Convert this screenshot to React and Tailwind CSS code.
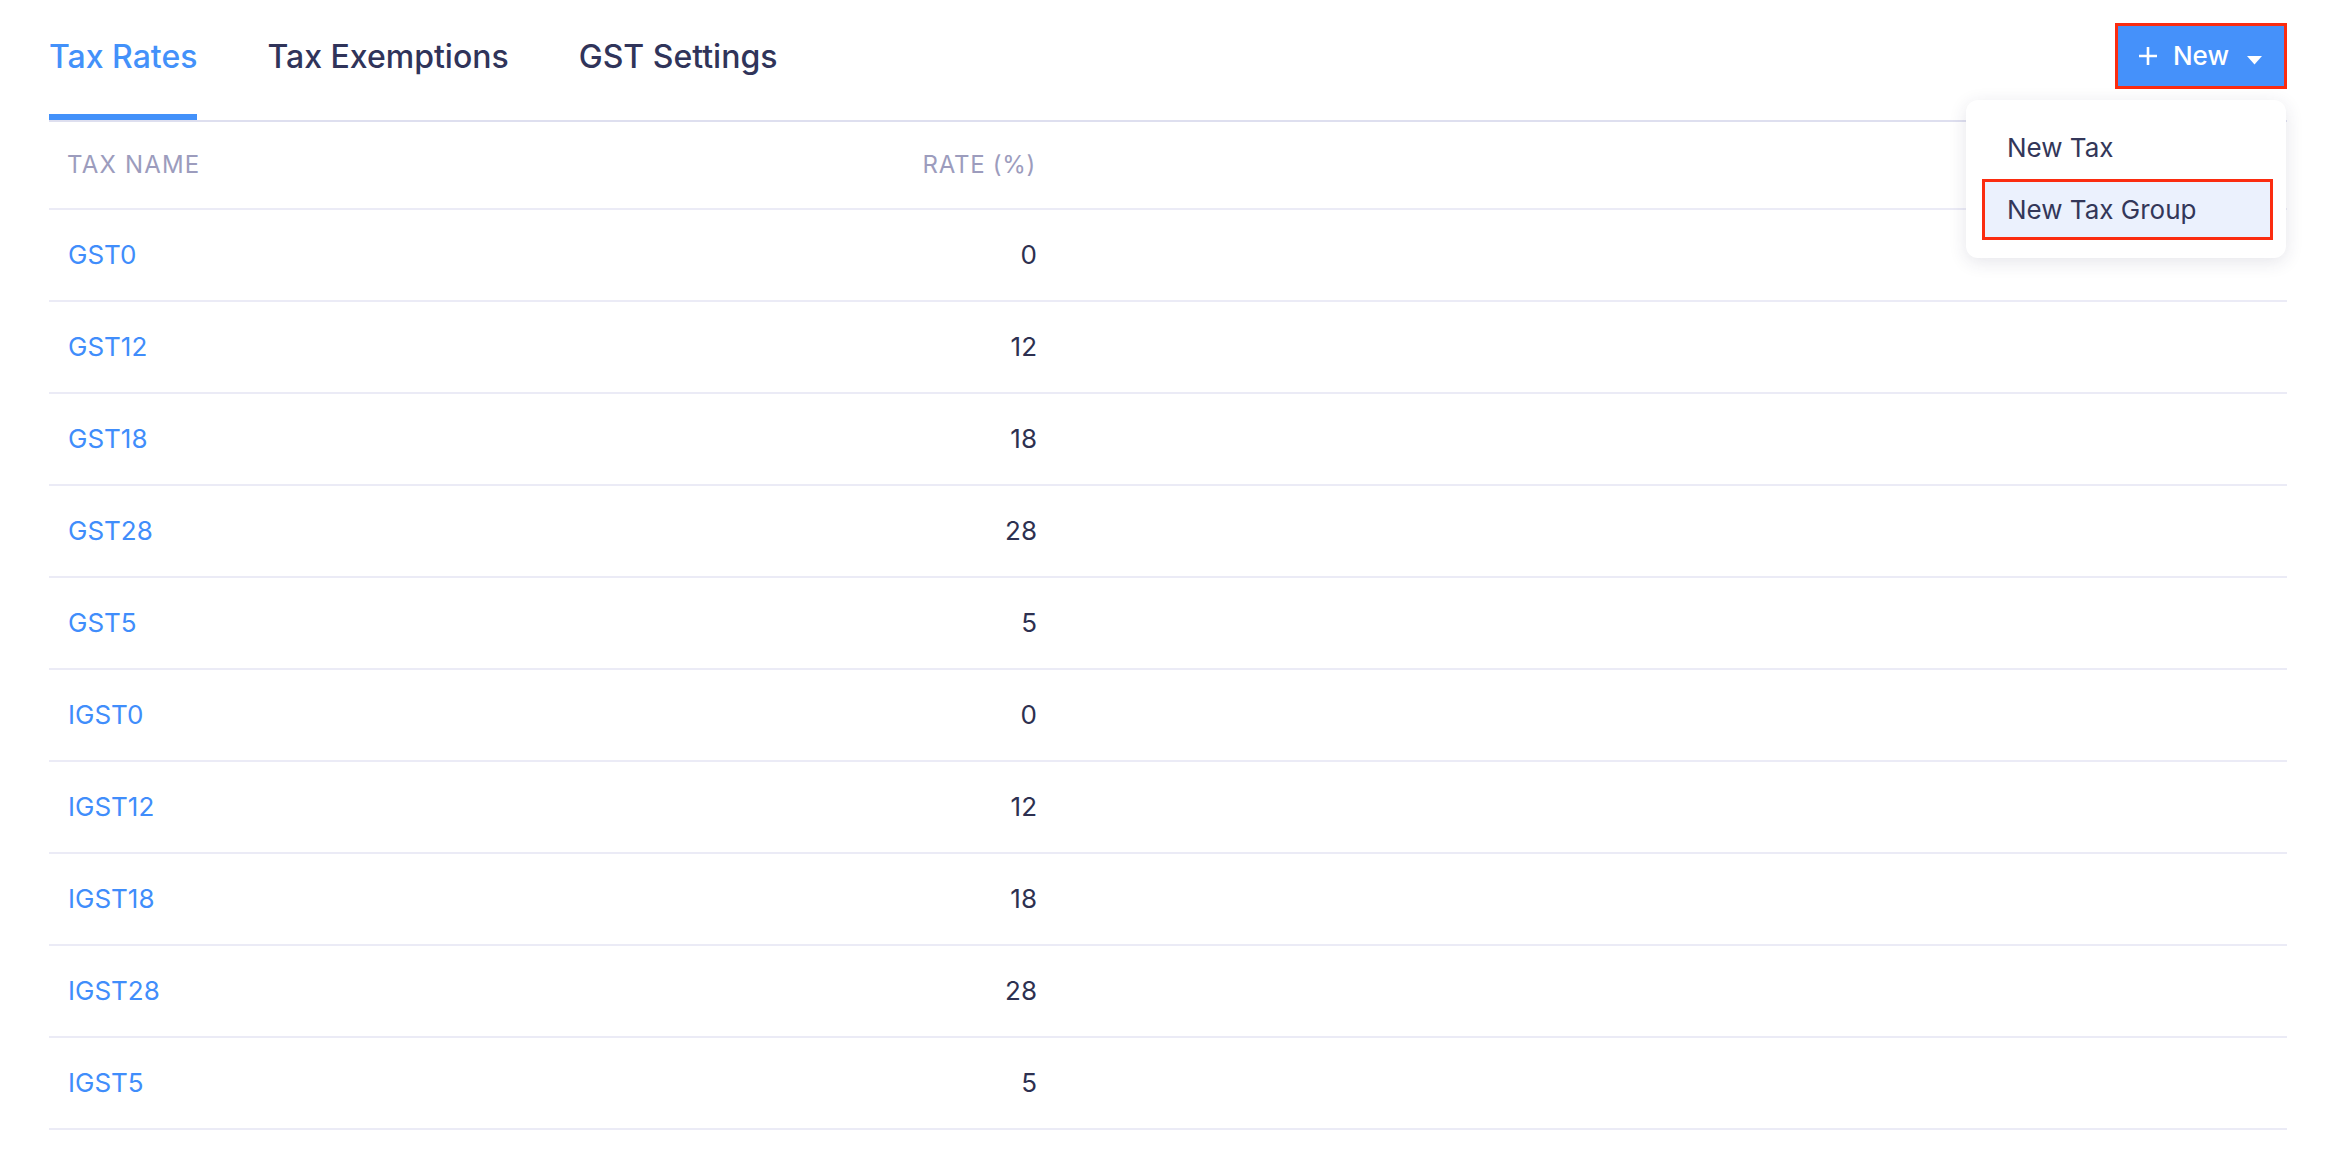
import React from "react";

const rows = [
  ["GST0", "0"],
  ["GST12", "12"],
  ["GST18", "18"],
  ["GST28", "28"],
  ["GST5", "5"],
  ["IGST0", "0"],
  ["IGST12", "12"],
  ["IGST18", "18"],
  ["IGST28", "28"],
  ["IGST5", "5"],
];

export default function App() {
  return (
    <div
      className="min-h-[1150px] w-full bg-white pl-[49px] pr-[41px]"
      style={{ fontFamily: "Inter, 'Noto Sans', sans-serif" }}
    >
      <div className="relative">
        {/* Header: tabs + button */}
        <div className="flex items-start justify-between border-b-2 border-[#dedfef]">
          <div className="flex gap-[70px]">
            <div className="border-b-[6px] border-[#4391fa] pt-[37px] pb-[37px] text-[32px] font-medium leading-[40px] text-[#4391fa]">
              Tax Rates
            </div>
            <div className="border-b-[6px] border-transparent pt-[37px] pb-[37px] text-[32px] font-medium leading-[40px] text-[#30345a]">
              Tax Exemptions
            </div>
            <div className="border-b-[6px] border-transparent pt-[37px] pb-[37px] text-[32px] font-medium leading-[40px] text-[#30345a]">
              GST Settings
            </div>
          </div>
          <div className="mt-[23px] flex h-[66px] items-center border-[3px] border-[#fb2c10] bg-[#4591fa] pl-[20px] pr-[22px] text-white">
            <svg width="20" height="20" viewBox="0 0 20 20" className="shrink-0">
              <path d="M10 1 V19 M1 10 H19" stroke="white" strokeWidth="2.6" />
            </svg>
            <span className="ml-[15px] text-[26px] font-medium leading-[30px]">New</span>
            <svg width="15" height="9" viewBox="0 0 15 9" className="ml-[18px] mt-[8px] shrink-0">
              <path d="M0 0 H15 L7.5 8.5 Z" fill="white" />
            </svg>
          </div>
        </div>

        {/* Table header */}
        <div className="flex border-b-2 border-[#ebebf6] pt-[28px] pb-[28px]">
          <div className="w-[700px] pl-[18px] text-[24px] leading-[30px] tracking-[0.05em] text-[#9c9cbd]">
            TAX NAME
          </div>
          <div className="w-[287px] text-right text-[24px] leading-[30px] tracking-[0.03em] text-[#9c9cbd]">
            RATE (%)
          </div>
        </div>

        {/* Rows */}
        {rows.map(([name, rate]) => (
          <div key={name} className="flex h-[92px] items-center border-b-2 border-[#ebebf6]">
            <div className="w-[700px] pl-[19px] text-[26px] leading-[32px] text-[#408dfb]">{name}</div>
            <div className="w-[288px] text-right text-[26px] leading-[32px] text-[#2d3050]">{rate}</div>
          </div>
        ))}

        {/* Dropdown menu */}
        <div className="absolute right-[1px] top-[100px] w-[320px] rounded-[12px] bg-white pb-[18px] pl-[16px] pr-[13px] pt-[17px] shadow-[0_4px_18px_rgba(40,40,80,0.12)]">
          <div className="flex h-[62px] items-center pl-[25px] text-[26px] leading-[32px] text-[#333759]">
            New Tax
          </div>
          <div className="flex h-[61px] items-center border-[3px] border-[#fb2c10] bg-[#ebf1fd] pl-[22px] text-[26px] leading-[32px] text-[#333759]">
            New Tax Group
          </div>
        </div>
      </div>
    </div>
  );
}
